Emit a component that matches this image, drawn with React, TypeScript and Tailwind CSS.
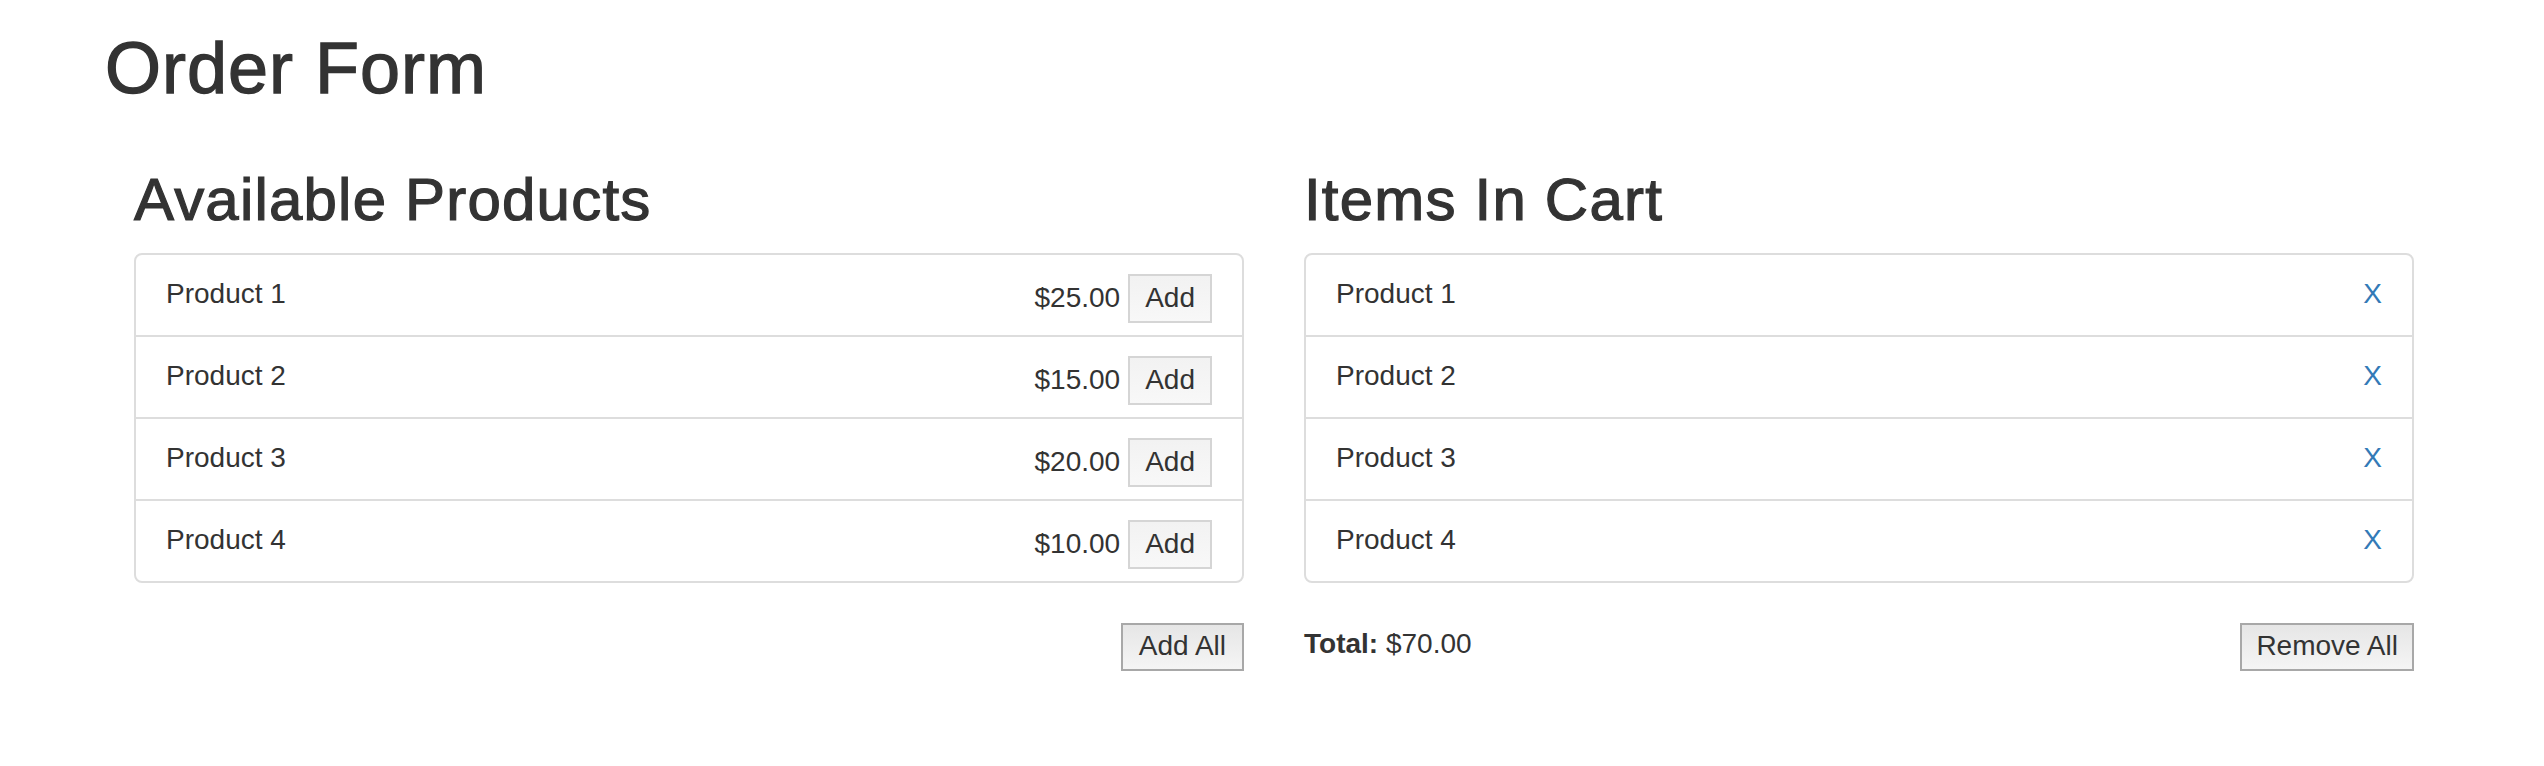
const products = [
  { name: 'Product 1', price: '$25.00' },
  { name: 'Product 2', price: '$15.00' },
  { name: 'Product 3', price: '$20.00' },
  { name: 'Product 4', price: '$10.00' },
];

const cart = ['Product 1', 'Product 2', 'Product 3', 'Product 4'];

const App = () => {
  return (
    <div className="min-h-screen bg-white text-[#333] font-['Liberation_Sans',Arial,sans-serif] text-[28px]">
      <div className="w-[2340px] mx-auto pt-[29px]">
        <h1 className="text-[72px] leading-[1.1] tracking-[1px] pl-[3px] mb-[59px] [-webkit-text-stroke:1.3px_#333]">
          Order Form
        </h1>

        <div className="grid grid-cols-2 gap-[60px] pl-[32px] pr-[28px]">
          {/* available products */}
          <div>
            <h2 className="text-[60px] leading-[66px] tracking-[1.2px] mb-[20px] [-webkit-text-stroke:1.2px_#333]">
              Available Products
            </h2>
            <div className="border-2 border-[#ddd] rounded-[8px]">
              {products.map((p, i) => (
                <div
                  key={p.name}
                  className={`flex justify-between px-[30px] ${i > 0 ? 'h-[82px] border-t-2 border-[#ddd]' : 'h-[80px]'}`}
                >
                  <span className="leading-[40px] mt-[19px]">{p.name}</span>
                  <div className="flex items-start gap-[8px] mt-[19px]">
                    <span className="leading-[47px]">{p.price}</span>
                    <button className="h-[49px] px-[15px] pb-[2px] leading-[43px] border-2 border-[#d5d5d5] bg-gradient-to-b from-[#f2f2f2] to-[#f8f8f8] text-[#333]">
                      Add
                    </button>
                  </div>
                </div>
              ))}
            </div>
            <div className="flex justify-end mt-[40px]">
              <button className="h-[48px] px-[16px] pb-[2px] leading-[42px] border-2 border-[#a8a8a8] bg-gradient-to-b from-[#e6e6e6] to-[#f5f5f5] text-[#333]">
                Add All
              </button>
            </div>
          </div>

          {/* cart */}
          <div>
            <h2 className="text-[60px] leading-[66px] tracking-[1.2px] mb-[20px] [-webkit-text-stroke:1.2px_#333]">
              Items In Cart
            </h2>
            <div className="border-2 border-[#ddd] rounded-[8px]">
              {cart.map((name, i) => (
                <div
                  key={name}
                  className={`flex justify-between px-[30px] ${i > 0 ? 'h-[82px] border-t-2 border-[#ddd]' : 'h-[80px]'}`}
                >
                  <span className="leading-[40px] mt-[19px]">{name}</span>
                  <a href="#" className="leading-[40px] mt-[19px] text-[#337ab7]">X</a>
                </div>
              ))}
            </div>
            <div className="flex justify-between items-start mt-[40px]">
              <div className="leading-[40px] mt-[1px]">
                <strong className="font-bold">Total:</strong> $70.00
              </div>
              <button className="h-[48px] px-[14px] pb-[2px] leading-[42px] border-2 border-[#a8a8a8] bg-gradient-to-b from-[#e6e6e6] to-[#f5f5f5] text-[#333]">
                Remove All
              </button>
            </div>
          </div>
        </div>
      </div>
    </div>
  );
};

export default App;
